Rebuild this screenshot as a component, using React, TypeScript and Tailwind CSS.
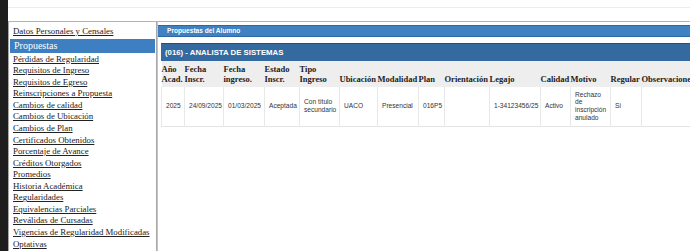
import React from "react";

// side menu of the student record
const menuItems = [
    "Pérdidas de Regularidad",
    "Requisitos de Ingreso",
    "Requisitos de Egreso",
    "Reinscripciones a Propuesta",
    "Cambios de calidad",
    "Cambios de Ubicación",
    "Cambios de Plan",
    "Certificados Obtenidos",
    "Porcentaje de Avance",
    "Créditos Otorgados",
    "Promedios",
    "Historia Académica",
    "Regularidades",
    "Equivalencias Parciales",
    "Reválidas de Cursadas",
    "Vigencias de Regularidad Modificadas",
    "Optativas",
];

// each value is split in the lines it shows on screen
const columns = [
    { head: ["Año", "Acad."], w: "w-[23px]", val: ["2025"] },
    { head: ["Fecha", "Inscr."], w: "w-[39px]", val: ["24/09/2025"] },
    { head: ["Fecha", "ingreso."], w: "w-[41px]", val: ["01/03/2025"] },
    { head: ["Estado", "Inscr."], w: "w-[35px]", val: ["Aceptada"] },
    { head: ["Tipo", "Ingreso"], w: "w-[40px]", val: ["Con título", "secundario"] },
    { head: ["Ubicación"], w: "w-[38px]", val: ["UACO"] },
    { head: ["Modalidad"], w: "w-[41px]", val: ["Presencial"] },
    { head: ["Plan"], w: "w-[26px]", val: ["016P5"] },
    { head: ["Orientación"], w: "w-[45px]", val: [] },
    { head: ["Legajo"], w: "w-[51px]", val: ["1-34123456/25"] },
    { head: ["Calidad"], w: "w-[30px]", val: ["Activo"] },
    { head: ["Motivo"], w: "w-[40px]", val: ["Rechazo", "de", "inscripción", "anulado"] },
    { head: ["Regular"], w: "w-[31px]", val: ["Si"] },
    { head: ["Observaciones"], w: "w-[70px]", val: [] },
];

const App = () => {
    return (
        <div className="flex h-[251px] w-[690px] overflow-hidden bg-white">
            {/* dark window edge */}
            <div className="w-[8px] shrink-0 bg-[#1e1e1e]" />

            <div className="flex flex-1 flex-col min-w-0">
                {/* top strip */}
                <div className="h-[22px] shrink-0 border-b border-[#b4b4b4]">
                    <div className="h-[8px] border-b border-[#ececec]" />
                </div>

                <div className="flex flex-1 min-h-0">
                    {/* menu */}
                    <div
                        className="w-[149px] shrink-0 border-x border-[#a8a8a8] pt-[4px] text-[8.8px] leading-[11.56px] text-[#222]"
                        style={{ fontFamily: '"Liberation Serif", serif' }}
                    >
                        <div className="pl-[4px] underline">Datos Personales y Censales</div>
                        <div className="mx-[1px] mt-[1px] mb-[1px] h-[14px] bg-[#3e7fc1] pl-[4px] text-[10px] leading-[14px] text-white">
                            Propuestas
                        </div>
                        <ul>
                            {menuItems.map((item) => (
                                <li key={item} className="pl-[4px] underline">
                                    {item}
                                </li>
                            ))}
                        </ul>
                    </div>

                    {/* main panel */}
                    <div className="flex-1 min-w-0 border-l border-[#c4c4c4] pt-[3px]">
                        <div
                            className="h-[12px] border-t border-b border-[#2b67a6] bg-[#4081c1] pl-[9px] text-[6.6px] font-bold leading-[10px] text-white"
                            style={{ fontFamily: '"Liberation Sans", sans-serif' }}
                        >
                            Propuestas del Alumno
                        </div>
                        <div className="ml-[3px] mt-[6px]">
                            <div
                                className="h-[18px] border-t border-[#1f4f86] bg-[#346a9f] pl-[4px] text-[7.8px] font-bold leading-[17px] text-white"
                                style={{ fontFamily: '"Liberation Sans", sans-serif' }}
                            >
                                (016) - ANALISTA DE SISTEMAS
                            </div>
                            <table className="border-collapse table-fixed w-[550px]">
                                <thead>
                                    <tr
                                        className="h-[26px] bg-[#eeeeee] text-[#222]"
                                        style={{ fontFamily: '"Liberation Serif", serif' }}
                                    >
                                        {columns.map((c) => (
                                            <th
                                                key={c.head.join(" ")}
                                                className={`${c.w} pb-[3px] text-left align-bottom text-[8.5px] font-bold leading-[9.5px] whitespace-nowrap`}
                                            >
                                                {c.head.map((h) => (
                                                    <div key={h}>{h}</div>
                                                ))}
                                            </th>
                                        ))}
                                    </tr>
                                </thead>
                                <tbody>
                                    <tr
                                        className="h-[39px] border-b border-[#e4e4e4]"
                                        style={{ fontFamily: '"Liberation Sans", sans-serif' }}
                                    >
                                        {columns.map((c) => (
                                            <td
                                                key={c.head.join(" ")}
                                                className="border-x border-[#e8e8e8] pl-[4px] align-middle text-[6.6px] leading-[7.8px] text-[#333] whitespace-nowrap"
                                            >
                                                {c.val.map((line) => (
                                                    <div key={line}>{line}</div>
                                                ))}
                                            </td>
                                        ))}
                                    </tr>
                                </tbody>
                            </table>
                        </div>
                    </div>
                </div>
            </div>
        </div>
    );
};

export default App;
